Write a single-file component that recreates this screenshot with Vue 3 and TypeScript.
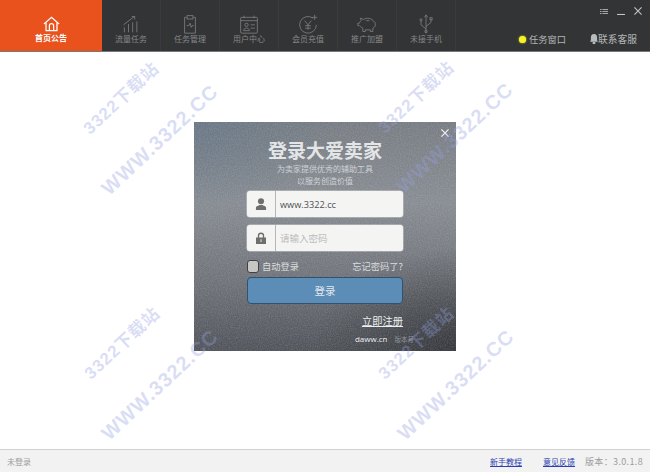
<script setup lang="ts">
const navItems = [
  { label: '流量任务', icon: 'chart' },
  { label: '任务管理', icon: 'clip' },
  { label: '用户中心', icon: 'card' },
  { label: '会员充值', icon: 'coin' },
  { label: '推广加盟', icon: 'pig' },
  { label: '未接手机', icon: 'usb' },
]
const marks = [
  { text: '3322下载站', x: 120, y: 45, cls: 'small' },
  { text: 'WWW.3322.CC', x: 160, y: 88, cls: 'big' },
  { text: '3322下载站', x: 415, y: 44, cls: 'small' },
  { text: 'WWW.3322.CC', x: 455, y: 86, cls: 'big' },
  { text: '3322下载站', x: 121, y: 290, cls: 'small' },
  { text: 'WWW.3322.CC', x: 160, y: 333, cls: 'big' },
  { text: '3322下载站', x: 415, y: 290, cls: 'small' },
  { text: 'WWW.3322.CC', x: 456, y: 333, cls: 'big' },
]
</script>

<template>
  <div class="win">
    <header class="top">
      <div class="home">
        <svg width="17" height="16" viewBox="0 0 20 19" fill="none" stroke="#fff" stroke-width="1.500">
          <path d="M1 9.500 10 1.500l9 8" />
          <path d="M3.500 8v9.500h13V8" />
          <path d="M7.500 17.500v-6a2.500 2.500 0 0 1 5 0v6" />
        </svg>
        <span>首页公告</span>
      </div>
      <div v-for="item in navItems" :key="item.label" class="nav">
        <svg class="ico" viewBox="0 0 24 24" fill="none" stroke="#7c7f81" stroke-width="1">
          <template v-if="item.icon === 'chart'">
            <path d="M4 22v-6M9 22v-10M14 22v-12M19 22V9" />
            <path d="M3 13 16 3M13 3h3.500v3.500" />
          </template>
          <template v-else-if="item.icon === 'clip'">
            <path d="M8 4H5.500v19h13V4H16" />
            <rect x="8.500" y="2" width="7" height="4" />
            <path d="M8 14h2.500l1.500-3 1.500 5 1-2h2" />
          </template>
          <template v-else-if="item.icon === 'card'">
            <rect x="2" y="4" width="20" height="19" rx="1" />
            <path d="M2 8h20M6 2v3M18 2v3M14 13h5M14 17h5" />
            <circle cx="9" cy="13" r="2" />
            <path d="M5.500 20c0-4 7-4 7 0z" />
          </template>
          <template v-else-if="item.icon === 'coin'">
            <path d="M18 5A10 10 0 1 0 22 13" />
            <path d="M8 8l4 5 4-5M12 13v6M8.500 14h7M8.500 17h7M20 1v6M17 4h6" />
          </template>
          <template v-else-if="item.icon === 'pig'">
            <path d="M5 8 4 5l4 1.500C12 4 18 5 20 9c1 0 2 1 2 4s-2 3-3 4v4h-3v-2H10v2H7v-4c-2-1-3-2-4-3H1v-3h2c0-1 1-2 2-3z" />
            <path d="M11 8h4" />
          </template>
          <template v-else>
            <path d="M12 23V2M10 4l2-3 2 3M12 18l-6-5V8M12 15l6-5V7" />
            <circle cx="6" cy="7" r="1.300" />
            <rect x="16.800" y="4.500" width="2.500" height="2.500" />
            <circle cx="12" cy="21" r="1.500" />
          </template>
        </svg>
        <span class="lbl">{{ item.label }}</span>
      </div>
      <div class="right">
        <div class="winctl">
          <svg width="8" height="7" viewBox="0 0 10 8" stroke="#c4c6c7" stroke-width="1"><path d="M0 1.500h2M3 1.500h7M0 4h2M3 4h7M0 6.500h2M3 6.500h7" /></svg>
          <svg width="8" height="7" viewBox="0 0 9 8" stroke="#c4c6c7" stroke-width="1.200"><path d="M0 7.400h9" /></svg>
          <svg width="8" height="8" viewBox="0 0 9 9" stroke="#c4c6c7" stroke-width="1.200"><path d="M.5.500l8 8M8.500.500l-8 8" /></svg>
        </div>
        <div class="tools">
          <span class="task"><i class="dot"></i>任务窗口</span>
          <span class="service">
            <svg width="8" height="10" viewBox="0 0 9 11" fill="#b9bbbc"><path d="M4.500 0C7 0 8 2 8 4v3l1 1.500H0L1 7V4c0-2 1-4 3.500-4zM3 9h3v2H3z" /></svg>联系客服
          </span>
        </div>
      </div>
    </header>

    <main class="body">
      <section class="dialog">
        <svg class="grain" width="262" height="229">
          <filter id="grainf">
            <feTurbulence type="fractalNoise" baseFrequency="0.9" numOctaves="2" seed="4" />
            <feColorMatrix values="0 0 0 0 1  0 0 0 0 1  0 0 0 0 1  0 0 0 1.400 -0.450" />
          </filter>
          <rect width="262" height="229" filter="url(#grainf)" opacity="0.18" />
        </svg>
        <svg class="close" width="8" height="8" viewBox="0 0 9 9" stroke="#f1f2f3" stroke-width="1.300"><path d="M.5.500l8 8M8.500.500l-8 8" /></svg>
        <h1>登录大爱卖家</h1>
        <p class="sub">为卖家提供优秀的辅助工具<br />以服务创造价值</p>
        <div class="field">
          <div class="fi">
            <svg width="12" height="12" viewBox="0 0 13 13" fill="#6e6e6c"><circle cx="6.500" cy="3.500" r="3.300" /><path d="M1 13v-2.500C1 8.500 4 8.500 5 7.500h3c1 1 4 1 4 3V13z" /></svg>
          </div>
          <span class="val">www.3322.cc</span>
        </div>
        <div class="field">
          <div class="fi">
            <svg width="10" height="12" viewBox="0 0 11 13" fill="#6e6e6c"><path fill-rule="evenodd" d="M2 6V4a3.500 3.500 0 0 1 7 0v2h2v7H0V6zm1.500 0h4V4a2 2 0 0 0-4 0zM5 8v3h1V8z" /></svg>
          </div>
          <span class="ph">请输入密码</span>
        </div>
        <div class="opts">
          <label class="auto"><i class="check"></i>自动登录</label>
          <span>忘记密码了?</span>
        </div>
        <button class="login">登录</button>
        <div class="reg"><span>立即注册</span></div>
        <div class="brand"><b>daww.cn</b><span>版本号</span></div>
      </section>
      <span
        v-for="(m, i) in marks"
        :key="i"
        class="mark"
        :class="m.cls"
        :style="{ left: m.x + 'px', top: m.y + 'px' }"
      >{{ m.text }}</span>
    </main>

    <footer class="foot">
      <span class="state">未登录</span>
      <div class="links">
        <a>新手教程</a>
        <a>意见反馈</a>
        <span class="ver">版本：3.0.1.8</span>
      </div>
    </footer>
  </div>
</template>

<style>
html, body { margin: 0; background: #fff; }
</style>

<style scoped>
.win {
  width: 650px;
  height: 472px;
  display: flex;
  flex-direction: column;
  overflow: hidden;
  font-family: "Noto Sans CJK SC", "Liberation Sans", sans-serif;
  background: #fff;
}
.top {
  height: 52px;
  box-sizing: border-box;
  flex: none;
  display: flex;
  background: #333435;
  border-bottom: 1px solid #77787a;
}
.home {
  width: 102px;
  background: #e9521c;
  color: #fff;
  font-size: 8px;
  font-weight: 700;
  display: flex;
  flex-direction: column;
  align-items: center;
  padding-top: 16px;
  box-sizing: border-box;
  line-height: 12px;
}
.nav {
  width: 59px;
  color: #85888a;
  font-size: 8px;
  line-height: 12px;
  display: flex;
  flex-direction: column;
  align-items: center;
  box-sizing: border-box;
  padding-top: 14px;
  border-right: 1px solid #3a3b3c;
}
.ico { height: 20px; width: 20px; }
.lbl { margin-top: -1px; }
.right {
  flex: 1;
  display: flex;
  flex-direction: column;
  justify-content: space-between;
  padding: 7px 8px 5px 0;
  align-items: flex-end;
}
.winctl { display: flex; gap: 9px; align-items: center; }
.tools {
  display: flex;
  gap: 24px;
  color: #b4b6b7;
  font-size: 9.250px;
  line-height: 14px;
  margin-right: 5px;
}
.task, .service { display: flex; align-items: center; }
.service { font-size: 9.750px; }
.dot {
  width: 7px;
  height: 7px;
  border-radius: 50%;
  background: #f5f227;
  box-shadow: 0 0 2px #f5f227;
  margin-right: 3px;
}

.body {
  flex: 1;
  position: relative;
  display: flex;
  align-items: flex-start;
  justify-content: center;
  padding-top: 70px;
}
.mark {
  position: absolute;
  transform: translate(-50%, -50%) rotate(-43deg);
  color: rgba(150, 160, 225, .36);
  font-family: "Liberation Sans", "Noto Sans CJK SC", sans-serif;
  font-weight: 700;
  white-space: nowrap;
  letter-spacing: 1px;
  pointer-events: none;
}
.small { font-size: 17px; }
.big { font-size: 20px; letter-spacing: 1px; }

.dialog {
  position: relative;
  width: 262px;
  height: 229px;
  box-sizing: border-box;
  padding: 16px 53px 0;
  color: #e6e8e9;
  background:
    radial-gradient(ellipse 55% 45% at 100% 100%, rgba(45, 46, 50, .75), rgba(45, 46, 50, 0)),
    radial-gradient(ellipse 55% 40% at 0% 0%, rgba(95, 115, 135, .6), rgba(95, 115, 135, 0)),
    linear-gradient(180deg, #777c82 0%, #878c92 35%, #6e7278 70%, #4f5359 100%);
  display: flex;
  flex-direction: column;
}
.dialog > * { position: relative; }
.grain { position: absolute !important; inset: 0; pointer-events: none; }
.close { position: absolute !important; top: 7px; right: 7px; }
h1 {
  margin: 0;
  font-size: 19px;
  line-height: 24px;
  text-align: center;
  color: #e3e5e7;
  font-weight: 700;
}
.sub {
  margin: 1px 0 5px;
  font-size: 8px;
  line-height: 11.500px;
  text-align: center;
  color: #cdd2d6;
}
.field {
  height: 26px;
  flex: none;
  background: #f4f4f3;
  border-radius: 3px;
  display: flex;
  align-items: center;
  margin-bottom: 8px;
  box-shadow: 0 0 0 .5px #c6c9cc;
}
.fi {
  width: 29px;
  height: 100%;
  flex: none;
  display: flex;
  align-items: center;
  justify-content: center;
  border-right: 1px solid #b9b7b4;
  box-sizing: border-box;
}
.val {
  padding-left: 4px;
  font-family: "Open Sans", sans-serif;
  font-size: 9.200px;
  color: #4e5154;
}
.ph { padding-left: 4px; font-size: 9.500px; color: #bdbdbd; }
.opts {
  display: flex;
  justify-content: space-between;
  align-items: center;
  font-size: 9.250px;
  color: #d9dcde;
  height: 14px;
  line-height: 14px;
  flex: none;
}
.auto { display: flex; align-items: center; gap: 3px; }
.check {
  width: 12px;
  height: 13px;
  box-sizing: border-box;
  background: #c6c6c4;
  border: 1px solid #3e4145;
  border-radius: 3px;
}
.login {
  display: block;
  width: 100%;
  height: 27px;
  flex: none;
  margin-top: 4px;
  padding: 0;
  background: #5c8db7;
  border: 1px solid #2e5270;
  border-radius: 4px;
  color: #e3e8ec;
  font-family: inherit;
  font-size: 10.500px;
}
.reg {
  text-align: right;
  margin-top: 10px;
  font-size: 10.250px;
  line-height: 14px;
  color: #eceeef;
}
.reg span { text-decoration: underline; }
.brand {
  display: flex;
  justify-content: flex-end;
  align-items: center;
  gap: 7px;
  margin-top: 6px;
  margin-right: -11px;
  font-size: 6.500px;
  line-height: 10px;
  color: #8f9296;
}
.brand b {
  font-family: "Open Sans", sans-serif;
  font-size: 8px;
  font-weight: 400;
  color: #eee;
}
.foot {
  height: 23px;
  flex: none;
  box-sizing: border-box;
  display: flex;
  justify-content: space-between;
  align-items: center;
  background: #f2f2f2;
  border-top: 1px solid #d2d2d2;
  padding: 0 7px;
  font-size: 8px;
  color: #9d9d9d;
}
.links { display: flex; gap: 21px; align-items: center; }
.links a { color: #2b3fb0; text-decoration: underline; }
.ver { margin-left: -11px; font-size: 9px; letter-spacing: .35px; }
</style>
